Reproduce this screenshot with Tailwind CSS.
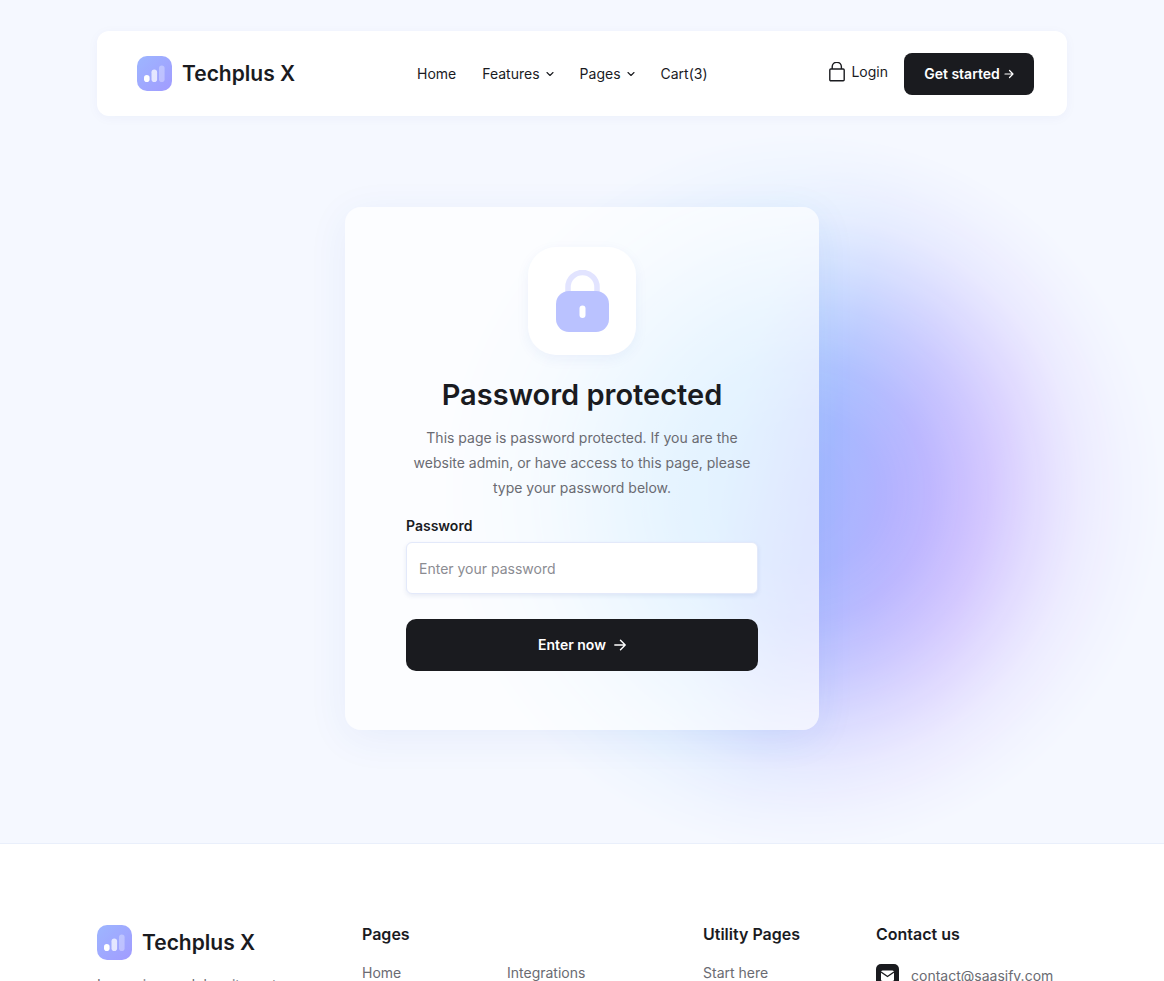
<!DOCTYPE html>
<html lang="en">
<head>
<meta charset="utf-8">
<meta name="viewport" content="width=device-width, initial-scale=1">
<title>Techplus X</title>
<script src="https://cdn.jsdelivr.net/npm/@tailwindcss/browser@4"></script>
</head>
<body class="bg-white font-['Inter','Liberation_Sans',sans-serif] text-[#1a1b1f] overflow-x-hidden">
<div class="relative overflow-hidden border-b border-[#e9effb] bg-[#f5f8ff] pt-[31px] pb-[113px]">
  <div aria-hidden="true" class="absolute top-[132px] left-[calc(50%-140px)] size-[720px] bg-[linear-gradient(103deg,#b2e2ff_22%,#abd8ff_41%,#a4b8ff_52%,#b1aeff_61%,#bfaaff_71%,#cdb8ff_85%)] mask-[radial-gradient(circle_360px_at_center,#000_0%,rgba(0,0,0,0.97)_22%,rgba(0,0,0,0.86)_36%,rgba(0,0,0,0.65)_50%,rgba(0,0,0,0.4)_64%,rgba(0,0,0,0.19)_77%,rgba(0,0,0,0.06)_90%,transparent_100%)]"></div>
  <header class="relative mx-auto flex h-[85px] w-5/6 items-center justify-between rounded-xl bg-white pr-[33px] pl-10 shadow-[0_2px_12px_rgba(20,60,160,0.04)]">
    <a href="#" class="flex items-center gap-2.5 text-[21px] leading-7 font-semibold">
      <svg class="size-[35px] rounded-[10px] bg-linear-to-br from-[#9db6ff] to-[#a19bff]" viewBox="0 0 35 35"><rect x="7" y="19" width="5.600" height="7" rx="2.800" fill="#fff"/><rect x="14.500" y="13.500" width="5.600" height="12.500" rx="2.800" fill="#fff" opacity=".72"/><rect x="22" y="9.500" width="5.600" height="16.500" rx="2.800" fill="#fff" opacity=".32"/></svg>
      Techplus X
    </a>
    <nav class="flex items-center gap-[26px] text-[14px] leading-5">
      <a href="#">Home</a>
      <a href="#" class="flex items-center gap-1.5">Features <svg class="size-2" viewBox="0 0 8 8" fill="none" stroke="currentColor" stroke-width="1.100" stroke-linecap="round" stroke-linejoin="round"><path d="M1 2.500 4 5.500 7 2.500"/></svg></a>
      <a href="#" class="flex items-center gap-1.5">Pages <svg class="size-2" viewBox="0 0 8 8" fill="none" stroke="currentColor" stroke-width="1.100" stroke-linecap="round" stroke-linejoin="round"><path d="M1 2.500 4 5.500 7 2.500"/></svg></a>
      <a href="#">Cart(3)</a>
    </nav>
    <div class="flex items-center gap-4">
      <a href="#" class="flex items-center gap-1.5 pb-1 text-[14px] leading-5"><svg class="h-5 w-4" viewBox="0 0 16 20" fill="none" stroke="currentColor" stroke-width="1.400"><rect x=".8" y="7" width="14.400" height="11.800" rx="1"/><path d="M3.200 7V4.800a4.600 4.600 0 0 1 9.200 0V7"/></svg>Login</a>
      <button type="button" class="flex h-[42px] w-[130px] items-center justify-center gap-1 rounded-lg bg-[#1a1b1f] text-[14px] leading-5 font-semibold text-white">Get started <svg class="size-2.5" viewBox="0 0 10 10" fill="none" stroke="currentColor" stroke-width="1.200" stroke-linecap="round" stroke-linejoin="round"><path d="M1 5h8M5.500 1.500 9 5 5.500 8.500"/></svg></button>
    </div>
  </header>
  <main class="relative mx-auto mt-[91px] w-full max-w-[474px] rounded-2xl bg-white/65 px-[61px] pt-10 pb-[59px] shadow-[0_8px_40px_rgba(40,80,200,0.07)]">
    <div class="mx-auto flex size-[108px] items-center justify-center rounded-[28px] bg-white shadow-[0_4px_14px_rgba(40,70,180,0.06)]">
      <svg class="h-[63px] w-[53px]" viewBox="0 0 53 63"><path d="M12 24V17a14.500 14.500 0 0 1 29 0V24" fill="none" stroke="#e2e4ff" stroke-width="5.500"/><rect y="21" width="53" height="41" rx="13" fill="#bac2ff"/><rect x="23.500" y="35.500" width="6" height="12.500" rx="3" fill="#fff"/></svg>
    </div>
    <h1 class="mt-[22px] text-center text-[29px] leading-9 font-semibold whitespace-nowrap">Password protected</h1>
    <p class="-mx-2 mt-3 text-center text-[14px] leading-[25px] text-[#6a6b72]">This page is password protected. If you are the<br>website admin, or have access to this page, please<br>type your password below.</p>
    <form class="mt-4">
      <label for="password" class="block text-[14px] leading-5 font-semibold">Password</label>
      <input id="password" type="password" placeholder="Enter your password" class="mt-1.5 block h-[52px] w-full rounded-md border border-[#e3e9fa] bg-white px-3 text-[14px] leading-5 shadow-[0_2px_5px_rgba(20,60,140,0.09)] placeholder:text-[#8b8c92]">
      <button type="submit" class="mt-[25px] flex h-[52px] w-full items-center justify-center gap-2 rounded-[10px] bg-[#1a1b1f] text-[14px] leading-5 font-semibold text-white">Enter now <svg class="size-3" viewBox="0 0 12 12" fill="none" stroke="currentColor" stroke-width="1.400" stroke-linecap="round" stroke-linejoin="round"><path d="M.8 6h10.400M6.500 1.200 11.200 6 6.500 10.800"/></svg></button>
    </form>
  </main>
</div>
<footer class="h-[137px] overflow-hidden bg-white pt-20">
  <div class="mx-auto grid w-5/6 grid-cols-[265px_341px_173px_1fr]">
    <div class="pt-px">
      <a href="#" class="flex items-center gap-2.5 text-[21px] leading-7 font-semibold">
        <svg class="size-[35px] rounded-[10px] bg-linear-to-br from-[#9db6ff] to-[#a19bff]" viewBox="0 0 35 35"><rect x="7" y="19" width="5.600" height="7" rx="2.800" fill="#fff"/><rect x="14.500" y="13.500" width="5.600" height="12.500" rx="2.800" fill="#fff" opacity=".72"/><rect x="22" y="9.500" width="5.600" height="16.500" rx="2.800" fill="#fff" opacity=".32"/></svg>
        Techplus X
      </a>
      <p class="mt-3 text-[14px] leading-[25px] text-[#6a6b72]">Lorem ipsum dolor sit amet</p>
    </div>
    <div>
      <h2 class="text-[16px] leading-5 font-semibold">Pages</h2>
      <div class="mt-[19px] grid grid-cols-[145px_1fr] text-[14px] leading-5 text-[#6a6b72]"><a href="#">Home</a><a href="#">Integrations</a></div>
    </div>
    <div>
      <h2 class="text-[16px] leading-5 font-semibold">Utility Pages</h2>
      <a href="#" class="mt-[19px] block text-[14px] leading-5 text-[#6a6b72]">Start here</a>
    </div>
    <div>
      <h2 class="text-[16px] leading-5 font-semibold">Contact us</h2>
      <a href="#" class="mt-5 flex items-center gap-3 text-[14px] leading-5 whitespace-nowrap text-[#6a6b72]"><svg class="size-[23px]" viewBox="0 0 23 23"><rect width="23" height="23" rx="5" fill="#1a1b1f"/><rect x="5" y="6.500" width="13" height="10.500" rx="1.500" fill="#fff"/><path d="m5 8 6.500 4.500L18 8" fill="none" stroke="#1a1b1f" stroke-width="1.400"/></svg>contact@saasify.com</a>
    </div>
  </div>
</footer>
</body>
</html>
